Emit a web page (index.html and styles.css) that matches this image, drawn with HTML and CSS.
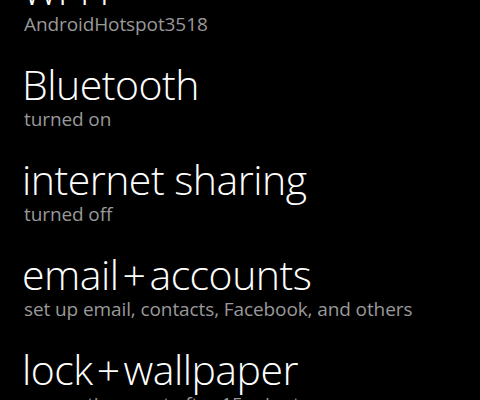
FILE: index.html
```html
<!DOCTYPE html>
<html lang="en">
<head>
<meta charset="utf-8">
<title>settings</title>
<link rel="stylesheet" href="styles.css">
</head>
<body>
<ul class="settings">
  <li class="item">
    <div class="title">Wi-Fi</div>
    <div class="sub">AndroidHotspot3518</div>
  </li>
  <li class="item">
    <div class="title">Bluetooth</div>
    <div class="sub">turned on</div>
  </li>
  <li class="item">
    <div class="title">internet sharing</div>
    <div class="sub">turned off</div>
  </li>
  <li class="item">
    <div class="title">email<span class="plus">+</span>accounts</div>
    <div class="sub">set up email, contacts, Facebook, and others</div>
  </li>
  <li class="item">
    <div class="title">lock<span class="plus">+</span>wallpaper</div>
    <div class="sub">screen times out after 15 minutes</div>
  </li>
</ul>
</body>
</html>
```
FILE: styles.css
```css
html, body {
  margin: 0;
  padding: 0;
  background: #000;
  height: 100%;
  overflow: hidden;
}
.settings {
  list-style: none;
  margin: -34px 0 0 0;
  padding: 0 0 0 22px;
  display: flex;
  flex-direction: column;
}
.item {
  height: 95px;
  display: flex;
  flex-direction: column;
}
.title {
  font-family: "Open Sans", sans-serif;
  font-weight: 350;
  font-size: 41px;
  line-height: 46px;
  letter-spacing: -0.5px;
  color: #fff;
  white-space: nowrap;
}
.plus {
  margin: 0 4px;
}
.sub {
  font-family: "Open Sans", sans-serif;
  font-size: 19px;
  line-height: 24px;
  letter-spacing: -0.1px;
  color: #999;
  white-space: nowrap;
  padding-left: 2px;
}
```
